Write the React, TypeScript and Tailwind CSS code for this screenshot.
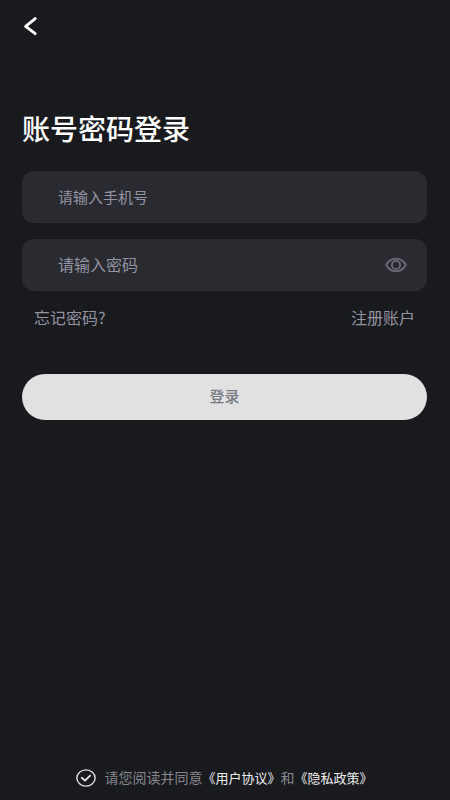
import { useState } from 'react';
import type { FormEvent } from 'react';

const FIELD_CLASS =
    'block h-[52px] w-full rounded-xl bg-[#2a2b30] pb-0.5 pl-9 text-[#9898a5] outline-none placeholder:text-[#9393a3] placeholder:opacity-100';

function BackIcon() {
    return (
        <svg viewBox="0 0 16 20" className="h-5 w-4" fill="none" aria-hidden="true">
            <path d="M13.2 2.6 3.6 10.3l9.6 7.4" stroke="currentColor" strokeWidth="2.9" strokeLinecap="round" strokeLinejoin="round" />
        </svg>
    );
}

function EyeIcon() {
    return (
        <svg viewBox="0 0 22 16" className="h-4 w-[22px]" fill="none" stroke="currentColor" strokeWidth="1.8" aria-hidden="true">
            <path d="M1.2 8C3.4 3.8 6.9 1.7 11 1.7S18.6 3.8 20.8 8C18.6 12.2 15.1 14.3 11 14.3S3.4 12.2 1.2 8Z" strokeLinejoin="round" />
            <circle cx="11" cy="8" r="4.1" />
        </svg>
    );
}

function AgreementCheckbox() {
    const [agreed, setAgreed] = useState(true);

    return (
        <span className="relative flex h-5 w-5 shrink-0">
            <input
                id="agreement"
                type="checkbox"
                checked={agreed}
                onChange={(e) => setAgreed(e.target.checked)}
                className="h-5 w-5 appearance-none rounded-full"
            />
            <svg viewBox="0 0 20 20" className="pointer-events-none absolute inset-0 h-5 w-5" fill="none" stroke="#e2e2e4" aria-hidden="true">
                <ellipse cx="10" cy="10" rx="9.1" ry="8.1" strokeWidth="1.4" />
                {agreed && <path d="m5.8 9.8 3.2 2.8 5.1-5" strokeWidth="1.9" strokeLinecap="round" strokeLinejoin="round" />}
            </svg>
        </span>
    );
}

export default function App() {
    const [showPassword, setShowPassword] = useState(false);

    const handleSubmit = (e: FormEvent) => e.preventDefault();

    return (
        <div className="flex min-h-screen flex-col bg-[#191a1e] pr-[23px] pl-[22px] font-['Noto_Sans_CJK_SC',sans-serif]">
            <header className="flex h-[52px] items-center">
                <button type="button" aria-label="返回" className="text-white">
                    <BackIcon />
                </button>
            </header>

            <main>
                <h1 className="mt-14 text-[28px] leading-10 font-medium text-white">账号密码登录</h1>

                <form onSubmit={handleSubmit} className="mt-[23px]">
                    <input type="tel" aria-label="手机号" placeholder="请输入手机号" className={`${FIELD_CLASS} pr-9 text-[15px]`} />

                    <div className="relative mt-4">
                        <input
                            type={showPassword ? 'text' : 'password'}
                            aria-label="密码"
                            placeholder="请输入密码"
                            className={`${FIELD_CLASS} pr-14 text-base`}
                        />
                        <button
                            type="button"
                            aria-label="显示密码"
                            onClick={() => setShowPassword(!showPassword)}
                            className="absolute inset-y-0 right-5 flex items-center text-[#6c6d77]"
                        >
                            <EyeIcon />
                        </button>
                    </div>

                    <div className="mt-3.5 flex justify-between px-3 text-base leading-6 text-[#9494a1]">
                        <a href="#forgot">忘记密码?</a>
                        <a href="#register">注册账户</a>
                    </div>

                    <button type="submit" className="mt-[45px] h-[46px] w-full rounded-full bg-[#e1e1e1] pb-0.5 text-[15px] font-medium text-[#777982]">
                        登录
                    </button>
                </form>
            </main>

            <footer className="mt-auto flex items-center justify-center gap-2 pb-2.5 leading-6">
                <AgreementCheckbox />
                <p className="text-[13px] whitespace-nowrap text-[#eeeeef]">
                    <label htmlFor="agreement" className="text-sm leading-6 text-[#85868f]">
                        请您阅读并同意
                    </label>
                    <a href="#terms">《用户协议》</a>
                    <span className="text-sm leading-6 text-[#85868f]">和</span>
                    <a href="#privacy">《隐私政策》</a>
                </p>
            </footer>
        </div>
    );
}
